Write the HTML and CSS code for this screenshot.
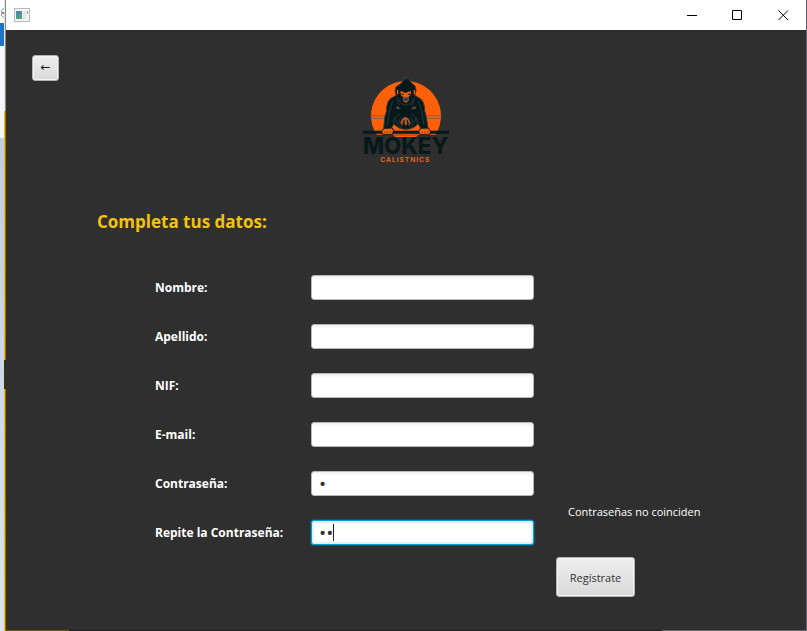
FILE: index.html
```html
<!DOCTYPE html>
<html lang="es">
<head>
<meta charset="utf-8">
<title>Mokey Calistnics</title>
<link rel="stylesheet" href="styles.css">
</head>
<body>
<div class="desktop" aria-hidden="true">
  <div class="desktop-tab">
    <svg class="desktop-icon" viewBox="0 0 4 12"><path d="M4 1Q0 3 2 6Q0 9 4 11" fill="none" stroke="#5fa5cf"/><rect x="2" y="5" width="2" height="2" fill="#e0604c"/></svg>
  </div>
  <div class="desktop-blue"></div>
  <div class="desktop-light"></div>
  <div class="desktop-rest"></div>
</div>
<div class="edge" aria-hidden="true"></div>
<div class="window">
  <header class="titlebar">
    <svg class="app-icon" viewBox="0 0 16 14" aria-hidden="true">
      <defs><linearGradient id="pane" x2="0.5" y2="1"><stop offset="0" stop-color="#4a7db4"/><stop offset="1" stop-color="#4fa878"/></linearGradient></defs>
      <rect x="0.5" y="0.5" width="15" height="13" fill="#f4f4f4" stroke="#b5b9c0"/>
      <rect x="2" y="3" width="6" height="8" fill="url(#pane)"/>
      <rect x="9" y="3" width="3" height="8" fill="#e3e3e3"/>
      <rect x="13" y="3" width="1" height="3" fill="#6fb08a"/>
    </svg>
    <div class="window-controls">
      <button type="button" aria-label="Minimizar"><svg viewBox="0 0 11 11"><path d="M1 5.5H11" /></svg></button>
      <button type="button" aria-label="Maximizar"><svg viewBox="0 0 11 11"><path d="M.5.5H9.5V9.5H.5Z"/></svg></button>
      <button type="button" aria-label="Cerrar"><svg viewBox="0 0 11 11"><path d="M.5.5L10 10M10 .5L.5 10"/></svg></button>
    </div>
  </header>
  <main class="content">
    <div class="top">
      <button class="button back" type="button" aria-label="Volver">←</button>
      <svg class="logo" viewBox="0 0 330 315" role="img" aria-label="Mokey Calistnics">
        <path d="M82 213A105 105 0 1 1 254 213Z" fill="#fe5f08"/>
        <path d="M83 109H120M213 109H249M75 125H117M219 125H250" stroke="#d96a2b" stroke-width="2"/>
        <path d="M61 152H112M222 152H274M61 160H110M224 160H274" stroke="#8d6142" stroke-width="3"/>
        <path d="M78 209H255V216H205L199 214H134L128 216H78Z" fill="#2f2f2f"/>
        <path d="M130 211H204L198 216H136Z" fill="#fe5f08"/>
        <g fill="#08191c" stroke="#34393a" stroke-width="3" stroke-linejoin="round">
          <path d="M148 59L138 66Q132 78 139 91L121 101Q109 113 110 136L104 159L101 191H123L132 176Q144 192 167 193Q191 192 204 176L213 191H234L229 157L224 137Q224 111 211 101L194 91Q202 76 195 63L187 56L180 49L187 45L178 46L181 36L173 43L169 34L167 44L160 37L162 47L153 45L158 51Z"/>
        </g>
        <path d="M148 77Q151 56 167 62Q184 56 190 76L184 83L181 79L168 84L155 80L153 86Z" fill="#08191c"/>
        <path d="M143 75V88M193 75V88" stroke="#e85b0d" stroke-width="4"/>
        <path d="M151 79Q160 79 167 85Q174 79 184 79L181 91L174 97L176 107L168 114L159 108L161 97L153 91Z" fill="#fe5f08"/>
        <path d="M154 85L163 88L156 91ZM181 85L172 88L179 91Z" fill="#08191c"/>
        <path d="M158 99Q168 92 178 99L175 108Q168 115 160 108Z" fill="#625149"/>
        <path d="M162 102Q168 106 174 102" fill="none" stroke="#08191c" stroke-width="2"/>
        <g fill="none" stroke="#2b3638" stroke-width="3">
          <path d="M128 109L119 135L112 180M204 107L215 134L222 179M140 96L155 117L167 120L182 116L194 98M142 104L149 122M193 104L185 122M130 174Q132 154 151 147M203 174Q202 155 183 147"/>
          <path d="M138 161Q140 181 154 186M196 160Q194 181 179 186M151 158L148 171L156 183M183 157L188 171L178 183"/>
        </g>
        <path d="M140 123L153 131L139 132ZM196 123L182 131L197 132Z" fill="#655249"/>
        <path d="M157 161Q165 151 176 161L182 173L175 182L172 167L170 181H165L162 167L157 182L151 172Z" fill="#ad5630"/>
        <path d="M163 165L159 178M172 165L175 178" stroke="#08191c" stroke-width="3"/>
        <path d="M39 197H297V206H39Z" fill="#08191c"/>
        <path d="M101 190L127 189L131 198L127 209H98L95 200ZM211 190L235 189L242 200L238 209H211L206 200Z" fill="#fe5f08" stroke="#08191c" stroke-width="3"/>
        <path d="M105 208V198M113 208V197M121 208V198M217 208V198M225 208V197M233 208V198" stroke="#8a3b13" stroke-width="2"/>
        <text class="logo-name" x="167" y="268" text-anchor="middle">MOKEY</text>
        <text class="logo-sub" x="166" y="290" text-anchor="middle">CALISTNICS</text>
      </svg>
    </div>
    <h1>Completa tus datos:</h1>
    <form class="form">
      <label for="nombre">Nombre:</label><input id="nombre" type="text">
      <label for="apellido">Apellido:</label><input id="apellido" type="text">
      <label for="nif">NIF:</label><input id="nif" type="text">
      <label for="email">E-mail:</label><input id="email" type="text">
      <label for="clave">Contraseña:</label><input id="clave" type="password" value="a">
      <label for="repite">Repite la Contraseña:</label>
      <div class="field"><input class="active" id="repite" type="password" value="ab"><span class="caret"></span></div>
      <p class="error" role="alert">Contraseñas no coinciden</p>
      <button class="button submit" type="button">Regístrate</button>
    </form>
  </main>
</div>
</body>
</html>
```
FILE: styles.css
```css
* { box-sizing: border-box; }

body {
  margin: 0;
  min-height: 100vh;
  display: grid;
  grid-template-columns: 4px 2px 1fr;
  background: #2f2f2f;
  font-family: "Open Sans", "Noto Sans", sans-serif;
  font-size: 11px;
}

.desktop { display: flex; flex-direction: column; }
.desktop-tab { height: 23px; padding-top: 7px; background: #fff; }
.desktop-icon { display: block; width: 4px; height: 12px; }
.desktop-blue { height: 23px; background: #1b75c8; }
.desktop-light { height: 92px; background: #f4f6f9; }
.desktop-rest { flex: 1; background: linear-gradient(#c3cde0, #d9e3f1); }

.edge {
  background: linear-gradient(90deg, transparent 1px, rgb(60 45 20 / 50%) 1px),
    linear-gradient(#e4e6e8 111px, #f5bd08 111px 360px, #35311d 360px 389px, #f5bd08 389px);
}

.window {
  display: flex;
  flex-direction: column;
  border-right: 1px solid #66666a;
  border-bottom: 1px solid;
  border-image: linear-gradient(90deg, #6d5a18 64px, #221d20 64px 656px, #66666a 656px) 1;
  border-left: 0;
  border-top: 0;
}

.titlebar {
  display: flex;
  align-items: center;
  justify-content: space-between;
  height: 30px;
  padding-left: 8px;
  background: #fff;
}
.app-icon { width: 16px; height: 14px; }
.window-controls { display: flex; }
.window-controls button {
  display: grid;
  place-items: center;
  width: 46px;
  height: 30px;
  padding: 0;
  border: 0;
  background: none;
}
.window-controls svg {
  width: 11px;
  height: 11px;
  fill: none;
  stroke: #000;
}

.content { flex: 1; padding: 25px 28px 25px 26px; }
.top {
  display: grid;
  grid-template-columns: 1fr 110px 1fr;
  align-items: start;
}
.logo { width: 110px; height: 105px; margin-top: 10px; }
.logo-name { font: 800 67px Inter, sans-serif; fill: #08191c; }
.logo-sub { font: 600 20px Inter, sans-serif; letter-spacing: 3px; fill: #f26a25; }

.button {
  border: 1px solid #b3b3b3;
  border-radius: 3px;
  background: linear-gradient(#efefef, #d9d9d9);
  box-shadow: inset 0 0 0 1px #f4f4f4;
  color: #333;
  font: inherit;
}
.back {
  width: 27px;
  height: 26px;
  padding: 0 0 2px;
  color: #111;
  font: 12px "DejaVu Sans", sans-serif;
}

h1 {
  margin: 40px 0 0 65px;
  color: #f5c211;
  font-size: 17px;
  font-weight: 700;
  line-height: 24px;
}

.form {
  display: grid;
  grid-template-columns: 156px 223px 1fr;
  grid-auto-rows: 25px;
  row-gap: 24px;
  align-items: center;
  margin: 41px 0 0 123px;
}
label {
  grid-column: 1;
  color: #fff;
  font-size: 12px;
  font-weight: 700;
  white-space: nowrap;
}
input {
  display: block;
  width: 100%;
  height: 25px;
  padding: 0 7px;
  border: 1px solid #b8b8b8;
  border-radius: 3px;
  background: linear-gradient(#f0f0f0, #fff 4px);
  color: #333;
  font: 12px "Open Sans", sans-serif;
  outline: none;
}
input[type="password"] { font-size: 19px; }
.active {
  border-color: #039ed3;
  background: #fff;
  box-shadow: inset 0 0 0 2px #dcf1f9, 0 0 2px #039ed3;
}
.field { position: relative; }
.caret {
  position: absolute;
  top: 4px;
  left: 22px;
  width: 1px;
  height: 17px;
  background: #222;
}
.error {
  grid-column: 3;
  grid-row: 6;
  align-self: start;
  margin: -18px 0 0 34px;
  color: #fff;
  line-height: 20px;
}
.submit {
  grid-column: 3;
  align-self: start;
  width: 79px;
  height: 40px;
  margin: -12px 0 0 22px;
  padding: 0;
}
```
